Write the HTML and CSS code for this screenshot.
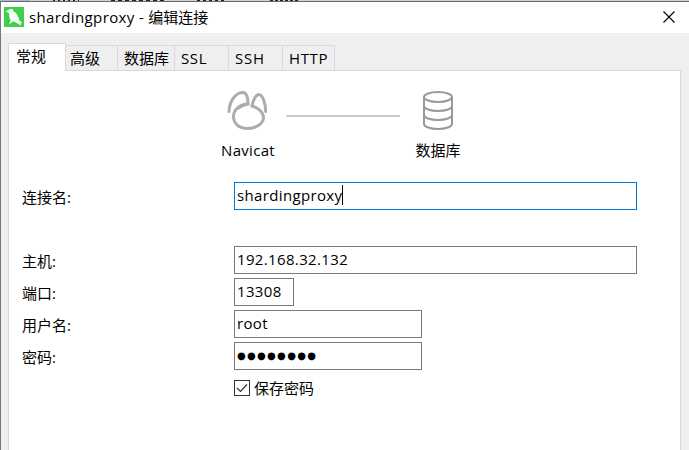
FILE: index.html
```
<!DOCTYPE html>
<html lang="zh-CN">
<head>
<meta charset="utf-8">
<title>shardingproxy - 编辑连接</title>
<link rel="stylesheet" href="styles.css">
</head>
<body>
<div class="behind"></div>
<div class="window">
  <header class="titlebar">
    <svg class="logo" viewBox="0 0 20 20"><rect width="20" height="20" fill="#41cf4b"/><path d="M1.500 4.200 4 3.300Q6 1.300 9.500 2.200L8.700 3.600Q12.500 5.500 14 9.500L15.500 13.500 18.500 16 16.700 16.200 16.500 18.800 13.700 16.500 9.300 14.300 5 17.500 6.500 13.500Q4.800 10 5.200 6.500L3.500 5.200Z" fill="#f3fff3"/></svg>
    <h1 class="title"><span class="latin">shardingproxy - </span>编辑连接</h1>
    <svg class="close" viewBox="0 0 12 12"><path d="M.5.5l11 11M11.500.5l-11 11" stroke="#000" stroke-width="1.1"/></svg>
  </header>
  <nav class="tabs">
    <div class="tab active">常规</div>
    <div class="tab t2">高级</div>
    <div class="tab t3">数据库</div>
    <div class="tab t4">SSL</div>
    <div class="tab t5">SSH</div>
    <div class="tab t6">HTTP</div>
  </nav>
  <main class="panel">
    <div class="diagram">
      <div class="node">
        <svg width="42" height="42" viewBox="0 0 42 42" fill="none" stroke="#adadad" stroke-width="3" stroke-linecap="round" stroke-linejoin="round"><path d="M2 21.500C2.500 10 9.500 2 16.500 2.500Q21 3.500 21 14Q16 14.500 11.500 18"/><path d="M25 16Q27 6 31.500 4.500C35.500 4.500 38.500 12.500 38.700 21.500"/><path d="M25 16C31 17.500 36.500 22.500 36.500 27.500C36.500 33.500 29 38.500 20.500 38.500C12 38.500 6.500 33.500 6.500 26.500C6.500 19.500 13 14 21 14"/></svg>
        <span class="navicat">Navicat</span>
      </div>
      <div class="wire"></div>
      <div class="node">
        <svg width="42" height="42" viewBox="0 0 42 42" fill="none" stroke="#999" stroke-width="2"><ellipse cx="21" cy="7" rx="14" ry="5"/><path d="M7 7V34C7 36.800 13 39 21 39S35 36.800 35 34V7M7 16C7 18.800 13 21 21 21S35 18.800 35 16M7 25C7 27.800 13 30 21 30S35 27.800 35 25"/></svg>
        <span>数据库</span>
      </div>
    </div>
    <div class="row first"><label>连接名:</label><div class="field wide focus"><span>shardingproxy</span><i class="caret"></i></div></div>
    <div class="row"><label>主机:</label><div class="field wide"><span>192.168.32.132</span></div></div>
    <div class="row"><label>端口:</label><div class="field port"><span>13308</span></div></div>
    <div class="row"><label>用户名:</label><div class="field"><span>root</span></div></div>
    <div class="row"><label>密码:</label><div class="field"><span class="dots">●●●●●●●●</span></div></div>
    <div class="save"><svg class="check" viewBox="0 0 16 16"><rect x=".5" y=".5" width="15" height="15" fill="#fff" stroke="#333"/><path d="M3 8l3.500 3.500L13 4.500" fill="none" stroke="#333" stroke-width="1.200"/></svg><span>保存密码</span></div>
  </main>
</div>
</body>
</html>
```
FILE: styles.css
```
* { box-sizing: border-box; }
body {
  margin: 0;
  width: 689px;
  height: 450px;
  overflow: hidden;
  background: #efefef;
  color: #000;
  font: 15px/20px "Open Sans", "Noto Sans CJK SC", sans-serif;
}
/* sliver of the window behind the dialog */
.behind {
  height: 1px;
  background:
    repeating-linear-gradient(90deg, #222 0 2px, transparent 2px 5px) 53px 0 / 26px 1px no-repeat,
    repeating-linear-gradient(90deg, #222 0 4px, transparent 4px 7px) 111px 0 / 55px 1px no-repeat,
    repeating-linear-gradient(90deg, #222 0 3px, transparent 3px 6px) 197px 0 / 28px 1px no-repeat,
    repeating-linear-gradient(90deg, #222 0 3px, transparent 3px 5px) 270px 0 / 28px 1px no-repeat,
    linear-gradient(90deg, #a3b9d2 30px, #d2d2d2 30px);
}
.window {
  height: 449px;
  border-top: 1px solid #696969;
  border-left: 1px solid #777;
  background: #efefef;
}
.titlebar {
  display: flex;
  align-items: flex-start;
  height: 31px;
  background: #fff;
}
.logo { width: 20px; height: 20px; margin: 5px 0 0 3px; }
.title {
  margin: 5px 0 0 5px;
  font-size: 15px;
  font-weight: 400;
  line-height: 20px;
  white-space: pre;
}
.latin { letter-spacing: .37px; }
.close { width: 12px; height: 12px; margin: 9px 14px 0 auto; overflow: visible; }
.tabs {
  display: flex;
  align-items: flex-end;
  position: relative;
  height: 37px;
  margin-left: 7px;
}
.tab {
  height: 25px;
  border: 1px solid #d9d9d9;
  border-left: 0;
  border-bottom: 0;
  padding: 2px 0 0 4px;
  line-height: 20px;
  white-space: nowrap;
}
.tab.active {
  width: 58px;
  height: 28px;
  margin-bottom: -1px;
  border-left: 1px solid #d9d9d9;
  padding: 2px 0 0 7px;
  background: #fff;
}
.t2 { width: 52px; }
.t3 { width: 57px; padding-left: 6px; }
.t4 { width: 54px; padding-left: 6px; letter-spacing: .6px; }
.t5 { width: 54px; padding-left: 6px; letter-spacing: .8px; }
.t6 { width: 52px; padding-left: 6px; letter-spacing: .6px; }
.panel {
  width: 673px;
  height: 391px;
  margin-left: 7px;
  border: 1px solid #d9d9d9;
  border-bottom: 0;
  background: #fff;
}
.diagram {
  display: flex;
  height: 111px;
  padding: 19px 0 0 204px;
}
.node {
  display: flex;
  flex-direction: column;
  align-items: center;
  width: 70px;
}
.node svg { display: block; }
.node span { margin-top: 8px; }
.navicat { letter-spacing: .3px; }
.wire { width: 114px; height: 2px; margin: 25px 3px 0; background: #ccc; }
.row { display: flex; height: 28px; margin-bottom: 4px; padding-left: 13px; }
.row.first { margin-bottom: 36px; }
.row label { width: 212px; padding-top: 5px; line-height: 20px; }
.field {
  display: flex;
  width: 188px;
  height: 28px;
  border: 1px solid #7a7a7a;
  padding: 2px 0 0 2px;
  line-height: 20px;
  letter-spacing: .35px;
}
.wide { width: 403px; }
.focus { border-color: #0078d7; }
.port { width: 60px; }
.caret { width: 1px; height: 20px; background: #000; }
.field .dots { padding-top: 1px; font: 10px/20px "DejaVu Sans", sans-serif; letter-spacing: 1.3px; }
.save { display: flex; padding: 6px 0 0 225px; }
.check { width: 16px; height: 16px; margin: 0 4px 0 0; }
.save span { line-height: 20px; margin-top: -2px; }
```
